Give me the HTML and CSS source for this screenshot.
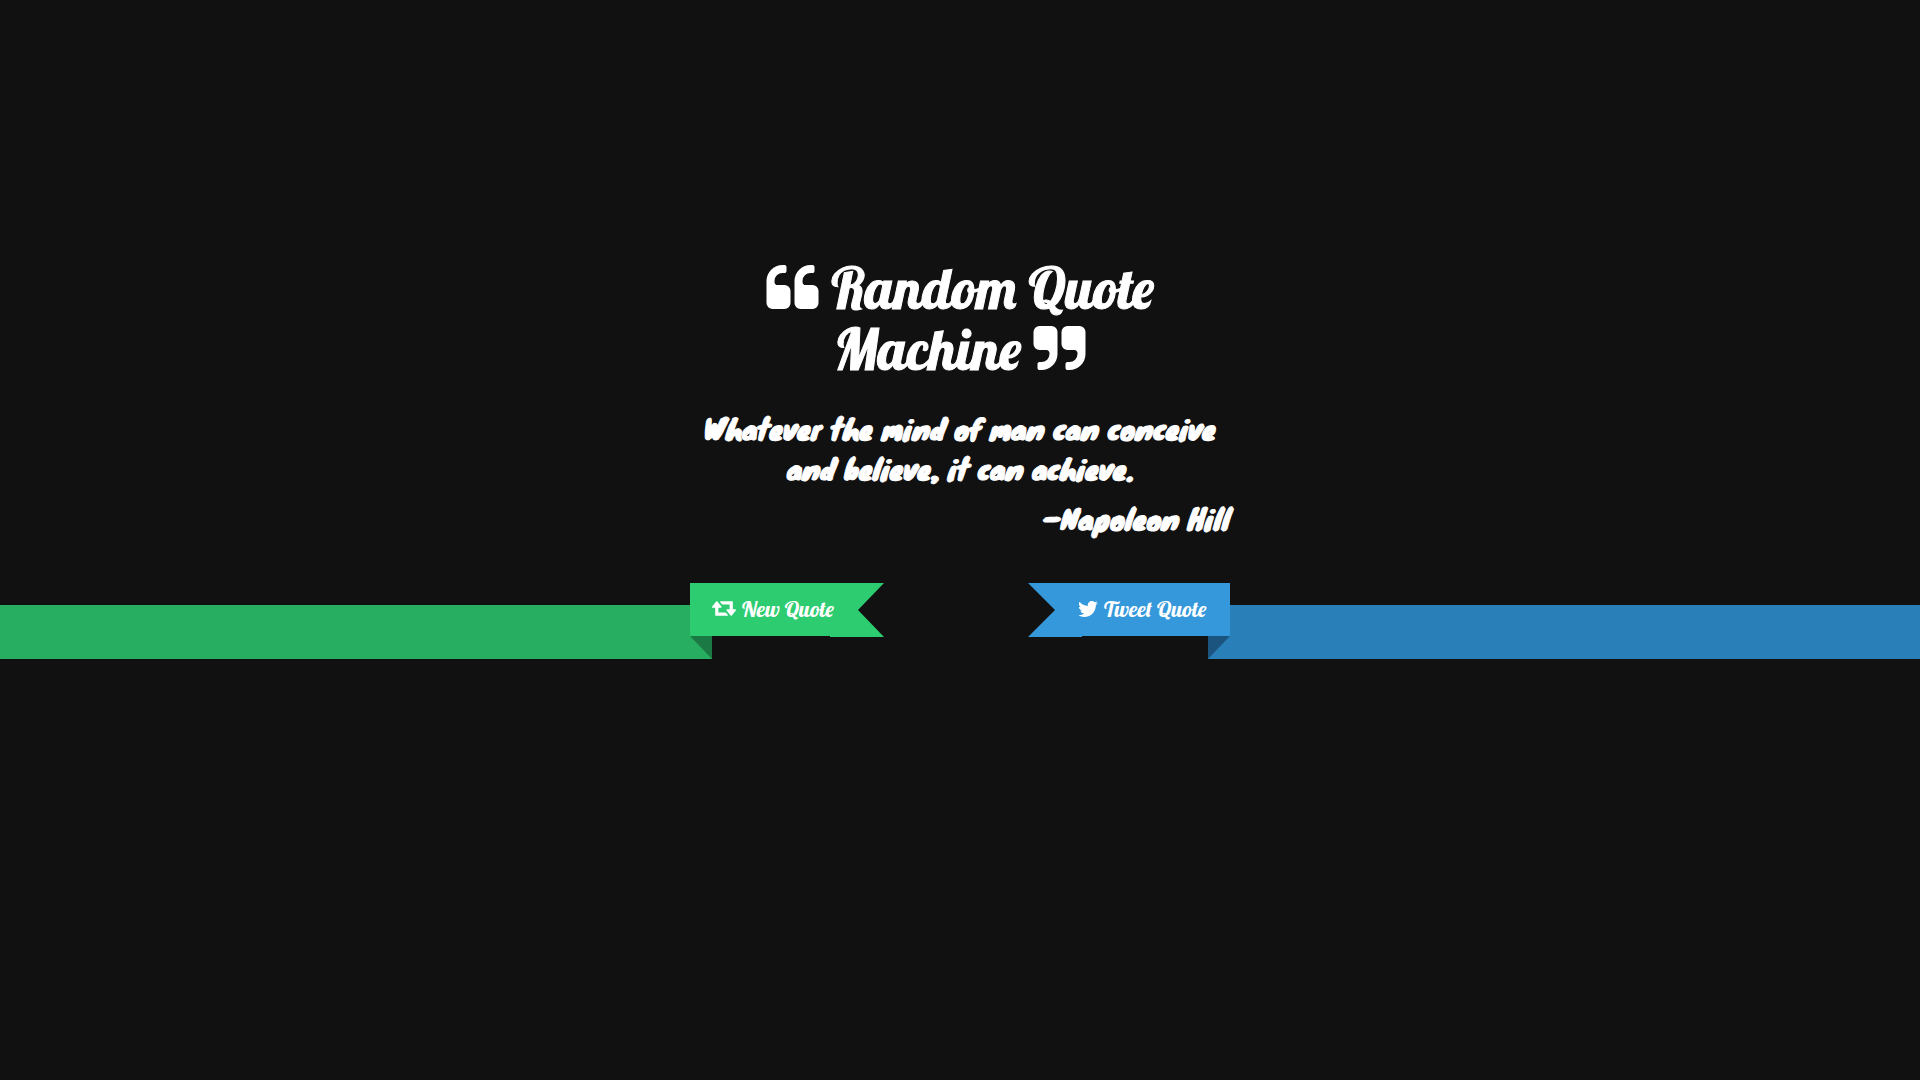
FILE: index.html
```html
<!DOCTYPE html>
<html lang="en">
<head>
<meta charset="utf-8">
<meta name="viewport" content="width=device-width, initial-scale=1">
<title>Random Quote Machine</title>
<link rel="stylesheet" href="styles.css">
</head>
<body>
<main>
  <section class="content">
    <h1 class="title">
      <svg class="mark" viewBox="64 128 1664 1408" aria-hidden="true"><path d="M832 960v384q0 80-56 136t-136 56h-384q-80 0-136-56t-56-136v-704q0-104 40.500-198.500t109.500-163.500 163.500-109.500 198.500-40.500h64q26 0 45 19t19 45v128q0 26-19 45t-45 19h-64q-106 0-181 75t-75 181v32q0 40 28 68t68 28h224q80 0 136 56t56 136zm896 0v384q0 80-56 136t-136 56h-384q-80 0-136-56t-56-136v-704q0-104 40.500-198.500t109.500-163.500 163.500-109.500 198.500-40.500h64q26 0 45 19t19 45v128q0 26-19 45t-45 19h-64q-106 0-181 75t-75 181v32q0 40 28 68t68 28h224q80 0 136 56t56 136z"/></svg>
      Random Quote Machine
      <svg class="mark" viewBox="64 128 1664 1408" aria-hidden="true"><path d="M832 320v704q0 104-40.500 198.500t-109.500 163.500-163.500 109.500-198.500 40.500h-64q-26 0-45-19t-19-45v-128q0-26 19-45t45-19h64q106 0 181-75t75-181v-32q0-40-28-68t-68-28h-224q-80 0-136-56t-56-136v-384q0-80 56-136t136-56h384q80 0 136 56t56 136zm896 0v704q0 104-40.500 198.500t-109.500 163.500-163.500 109.500-198.500 40.500h-64q-26 0-45-19t-19-45v-128q0-26 19-45t45-19h64q106 0 181-75t75-181v-32q0-40-28-68t-68-28h-224q-80 0-136-56t-56-136v-384q0-80 56-136t136-56h384q80 0 136 56t56 136z"/></svg>
    </h1>
    <p class="quote">Whatever the mind of man can conceive and believe, it can achieve.</p>
    <p class="author">–Napoleon Hill</p>
  </section>
  <div class="ribbons">
    <div class="band band-green"></div>
    <div class="actions">
      <button class="ribbon ribbon-new" type="button">
        <svg class="icon icon-retweet" viewBox="0 384 1920 1152" aria-hidden="true"><path d="M1280 1504q0 13-9.500 22.500t-22.500 9.500h-960q-8 0-13.500-2t-9-7-5.500-8-3-11.500-1-11.500v-600h-192q-26 0-45-19t-19-45q0-24 15-41l320-384q19-22 49-22t49 22l320 384q15 17 15 41 0 26-19 45t-45 19h-192v384h576q16 0 25 11l160 192q7 10 7 21zm640-416q0 24-15 41l-320 384q-20 23-49 23t-49-23l-320-384q-15-17-15-41 0-26 19-45t45-19h192v-384h-576q-16 0-25-12l-160-192q-7-9-7-20 0-13 9.500-22.500t22.500-9.500h960q8 0 13.500 2t9 7 5.500 8 3 11.500 1 11.500v600h192q26 0 45 19t19 45z"/></svg>
        New Quote
      </button>
      <a class="ribbon ribbon-tweet" href="#tweet">
        <svg class="icon icon-twitter" viewBox="108 256 1576 1280" aria-hidden="true"><path d="M1684 408q-67 98-162 167 1 14 1 42 0 130-38 259.500t-115.500 248.500-184.500 210.500-258 146-323 54.500q-271 0-496-145 35 4 78 4 225 0 401-138-105-2-188-64.500t-114-159.500q33 5 61 5 43 0 85-11-112-23-185.500-111.500t-73.500-205.500v-4q68 38 146 41-66-44-105-115t-39-154q0-88 44-163 121 149 294.500 238.500t371.500 99.500q-8-38-8-74 0-134 94.500-228.500t228.500-94.500q140 0 236 102 109-21 205-78-37 115-142 178 93-10 186-50z"/></svg>
        Tweet Quote
      </a>
    </div>
    <div class="band band-blue"></div>
  </div>
</main>
</body>
</html>
```
FILE: styles.css
```css
* {
  box-sizing: border-box;
}

body {
  margin: 0;
  background: #111;
  color: #fff;
  overflow-x: hidden;
}

main {
  padding-top: 258px;
}

svg {
  fill: currentColor;
}

.content {
  max-width: 540px;
  margin: 0 auto;
  -webkit-text-stroke: 1px currentColor;
}

.title {
  margin: 0;
  padding: 0 40px;
  font: 56px/61px Lobster, "Liberation Serif", serif;
  text-align: center;
}

.mark {
  width: 53px;
  height: 44px;
}

.quote,
.author {
  margin: 0;
  font: 28px/40px Knewave, "Liberation Sans", sans-serif;
}

.quote {
  padding-top: 28px;
  text-align: center;
}

.author {
  padding-top: 10px;
  text-align: right;
}

.ribbons {
  display: grid;
  grid-template-columns: 1fr minmax(0, 540px) 1fr;
  margin-top: 45px;
}

.band {
  height: 54px;
  margin-top: 22px;
}

.band-green {
  margin-right: -22px;
  background: #27ae60;
}

.band-blue {
  margin-left: -22px;
  background: #2980b9;
}

.actions {
  position: relative;
  z-index: 1;
  display: flex;
  justify-content: space-between;
  align-items: flex-start;
}

.ribbon {
  position: relative;
  display: flex;
  align-items: center;
  gap: 6px;
  height: 53px;
  border: 0;
  color: #fff;
  font: 22px/24px Lobster, "Liberation Serif", serif;
  text-decoration: none;
  white-space: nowrap;
  cursor: pointer;
}

.ribbon::before {
  content: "";
  position: absolute;
  inset: 0 0 -1px;
  z-index: -1;
}

.ribbon::after {
  content: "";
  position: absolute;
  top: 53px;
  width: 22px;
  height: 23px;
}

.ribbon-new {
  width: 194px;
  padding: 0 22px 2px;
  background: none;
}

.ribbon-new::before {
  background: #2ecc71;
  clip-path: polygon(0 0, 100% 0, calc(100% - 26px) 50%, 100% 100%, 140px 100%, 140px 53px, 0 53px);
}

.ribbon-new::after {
  left: 0;
  background: #1b7943;
  clip-path: polygon(0 0, 100% 0, 100% 100%);
}

.ribbon-tweet {
  width: 202px;
  padding: 0 22px 2px 50px;
}

.ribbon-tweet::before {
  background: #3498db;
  clip-path: polygon(0 0, 100% 0, 100% 53px, 54px 53px, 54px 100%, 0 100%, 27px 50%);
}

.ribbon-tweet::after {
  right: 0;
  background: #1c5480;
  clip-path: polygon(0 0, 100% 0, 0 100%);
}

.icon-retweet {
  width: 24px;
  height: 15px;
}

.icon-twitter {
  width: 20px;
  height: 16px;
}
```
